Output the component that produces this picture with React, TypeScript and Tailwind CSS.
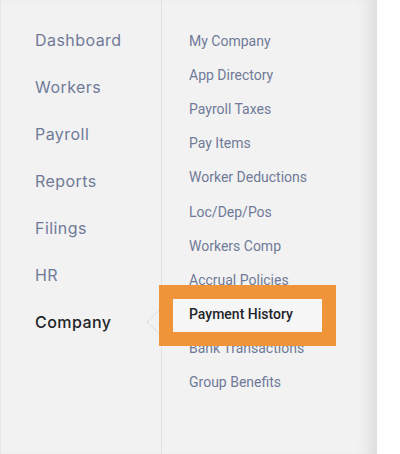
const mainNav = ['Dashboard', 'Workers', 'Payroll', 'Reports', 'Filings', 'HR', 'Company']

const companyNav = [
  'My Company',
  'App Directory',
  'Payroll Taxes',
  'Pay Items',
  'Worker Deductions',
  'Loc/Dep/Pos',
  'Workers Comp',
  'Accrual Policies',
  'Payment History',
  'Bank Transactions',
  'Group Benefits',
]

export default function App() {
  return (
    <div className="flex h-[454px] w-[400px] overflow-hidden bg-white">
      <div className="relative flex h-full w-[377px] border-l border-[#e6e6e6] bg-[#f2f2f2] shadow-[inset_-16px_0_16px_-10px_rgba(0,0,0,0.1)]">
        {/* main nav */}
        <ul className="w-[160px] shrink-0 pl-[34px] pt-[16px] font-['Inter',sans-serif] text-[16px] tracking-[0.45px]">
          {mainNav.map((item) => (
            <li
              key={item}
              className={
                item === 'Company'
                  ? 'flex h-[47px] items-center font-medium text-[#222429]'
                  : 'flex h-[47px] items-center text-[#707a98]'
              }
            >
              {item}
            </li>
          ))}
        </ul>

        {/* company submenu */}
        <div className="relative flex-1 border-l border-[#e2e2e2]">
          <svg
            className="absolute left-[-16px] top-[307px]"
            width="17"
            height="30"
            viewBox="0 0 17 30"
          >
            <polygon points="17,0 1,15 17,30" fill="#f2f2f2" />
            <polyline points="17,0 1,15 17,30" fill="none" stroke="#dcdcdc" strokeWidth="1" />
          </svg>

          <ul className="pl-[27px] pt-[24px] font-['Roboto',sans-serif] text-[14px]">
            {companyNav.map((item) => (
              <li
                key={item}
                className={
                  item === 'Payment History'
                    ? 'relative z-20 flex h-[34.2px] items-center font-medium text-[#222429]'
                    : 'flex h-[34.2px] items-center text-[#707a98]'
                }
              >
                {item}
              </li>
            ))}
          </ul>

          {/* highlight annotation */}
          <div className="absolute left-[-3px] top-[285px] z-10 h-[61px] w-[177px] border-[14px] border-[#f0943a] bg-[#f6f6f6]" />
        </div>
      </div>
    </div>
  )
}
